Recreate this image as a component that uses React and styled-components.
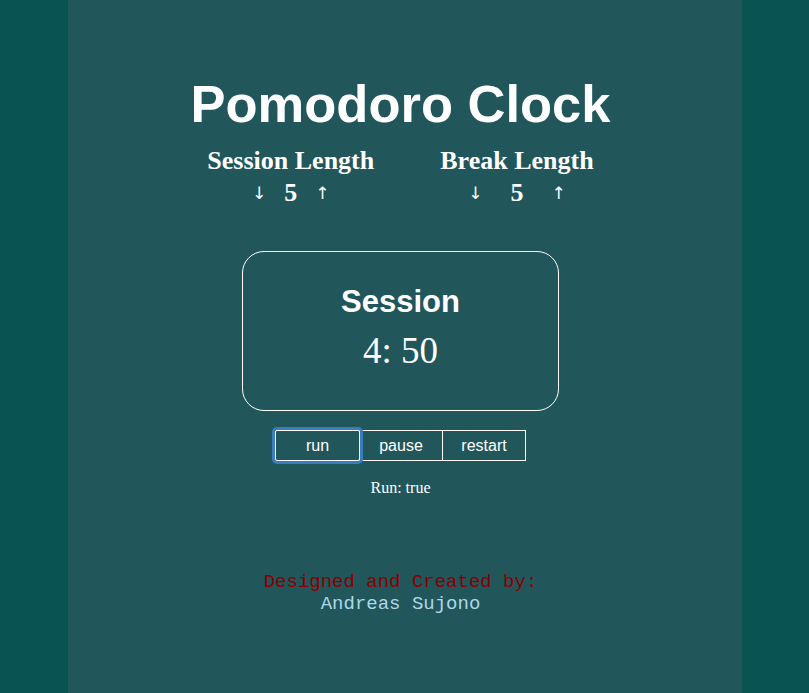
import React from "react";
import styled, { createGlobalStyle } from "styled-components";

const GlobalStyle = createGlobalStyle`
  html, body {
    margin: 0;
    padding: 0;
    height: 100%;
    background: #0a5353;
  }
  #root {
    min-height: 100%;
  }
`;

const Page = styled.div`
  width: 674px;
  min-height: 693px;
  margin: 0 auto;
  background: #21565b;
  color: #fff;
  display: flex;
  flex-direction: column;
  align-items: center;
  padding: 74px 8px 0 0;
  box-sizing: border-box;
`;

const Title = styled.h1`
  margin: 0;
  font-family: "Liberation Sans", Arial, sans-serif;
  font-weight: bold;
  font-size: 52.5px;
  line-height: 60px;
`;

const Settings = styled.div`
  display: flex;
  gap: 66px;
  margin-top: 12px;
  font-family: "Liberation Serif", "Times New Roman", serif;
  font-weight: bold;
`;

const Setting = styled.div`
  display: flex;
  flex-direction: column;
  align-items: center;
`;

const SettingLabel = styled.div`
  font-size: 26px;
  line-height: 30px;
`;

const Stepper = styled.div`
  display: flex;
  align-items: center;
  gap: ${p => p.$gap}px;
  font-size: 26px;
  line-height: 32px;
  margin-top: 1px;
`;

const Arrow = styled.span`
  font-family: "DejaVu Sans", sans-serif;
  font-weight: normal;
  font-size: 17px;
  cursor: pointer;
`;

const TimerBox = styled.div`
  margin-top: 42px;
  width: 317px;
  height: 160px;
  box-sizing: border-box;
  border: 1px solid #fff;
  border-radius: 22px;
  display: flex;
  flex-direction: column;
  align-items: center;
  padding-top: 32px;
`;

const TimerLabel = styled.div`
  font-family: "Liberation Sans", Arial, sans-serif;
  font-weight: bold;
  font-size: 31px;
  line-height: 36px;
`;

const TimerValue = styled.div`
  font-family: "Liberation Serif", "Times New Roman", serif;
  font-size: 37px;
  line-height: 44px;
  margin-top: 9px;
`;

const Controls = styled.div`
  display: flex;
  margin-top: 19px;
`;

const Button = styled.button`
  width: ${p => (p.$first ? 85 : 84)}px;
  height: 31px;
  box-sizing: border-box;
  background: transparent;
  color: #fff;
  border: 1px solid #fff;
  margin-left: ${p => (p.$first ? 0 : -1)}px;
  font-family: "Liberation Sans", Arial, sans-serif;
  font-size: 16px;
  padding: 0;
  outline: none;
  box-shadow: ${p => (p.$focused ? "0 0 0 3px #3a7cbd" : "none")};
  border-radius: ${p => (p.$focused ? "2px" : "0")};
  position: relative;
  z-index: ${p => (p.$focused ? 1 : 0)};
`;

const Status = styled.div`
  margin-top: 18px;
  font-family: "Liberation Serif", "Times New Roman", serif;
  font-size: 16px;
`;

const Footer = styled.footer`
  margin-top: 74px;
  font-family: "Liberation Mono", "Courier New", monospace;
  font-size: 19px;
  line-height: 22px;
  text-align: center;
`;

const Credit = styled.div`
  color: ${p => p.$color};
`;

export default function App() {
  return (
    <>
      <GlobalStyle />
      <Page>
        <Title>Pomodoro Clock</Title>
        <Settings>
          <Setting>
            <SettingLabel>Session Length</SettingLabel>
            <Stepper $gap={18}>
              <Arrow>↓</Arrow>
              <span>5</span>
              <Arrow>↑</Arrow>
            </Stepper>
          </Setting>
          <Setting>
            <SettingLabel>Break Length</SettingLabel>
            <Stepper $gap={28}>
              <Arrow>↓</Arrow>
              <span>5</span>
              <Arrow>↑</Arrow>
            </Stepper>
          </Setting>
        </Settings>
        <TimerBox>
          <TimerLabel>Session</TimerLabel>
          <TimerValue>4: 50</TimerValue>
        </TimerBox>
        <Controls>
          <Button $first $focused>run</Button>
          <Button>pause</Button>
          <Button>restart</Button>
        </Controls>
        <Status>Run: true</Status>
        <Footer>
          <Credit $color="#8b0000">Designed and Created by:</Credit>
          <Credit $color="#add8e6">Andreas Sujono</Credit>
        </Footer>
      </Page>
    </>
  );
}
